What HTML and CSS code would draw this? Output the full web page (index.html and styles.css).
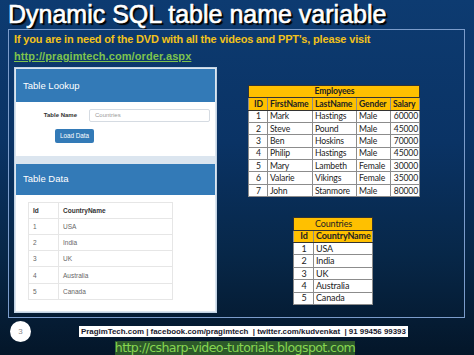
FILE: index.html
```html
<!DOCTYPE html>
<html lang="en">
<head>
    <meta charset="UTF-8">
    <title>Dynamic SQL table name variable</title>
    <link rel="stylesheet" href="styles.css">
</head>
<body>
    <div class="slide">
        <h1 class="slide-title">Dynamic SQL table name variable</h1>

        <div class="frame">
            <div class="notice">
                <p class="notice-text">If you are in need of the DVD with all the videos and PPT's, please visit</p>
                <a class="notice-link" href="#">http://pragimtech.com/order.aspx</a>
            </div>

            <div class="frame-content">
                <div class="app">
                    <div class="panel">
                        <div class="panel-heading">Table Lookup</div>
                        <div class="panel-body lookup-body">
                            <div class="form-row">
                                <label class="form-label">Table Name</label>
                                <div class="form-input">Countries</div>
                            </div>
                            <button class="load-button">Load Data</button>
                        </div>
                    </div>

                    <div class="panel panel-grow">
                        <div class="panel-heading">Table Data</div>
                        <div class="panel-body data-body">
                            <table class="data-table">
                                <tr><th class="col-id">Id</th><th>CountryName</th></tr>
                                <tr><td class="col-id">1</td><td>USA</td></tr>
                                <tr><td class="col-id">2</td><td>India</td></tr>
                                <tr><td class="col-id">3</td><td>UK</td></tr>
                                <tr><td class="col-id">4</td><td>Australia</td></tr>
                                <tr><td class="col-id">5</td><td>Canada</td></tr>
                            </table>
                        </div>
                    </div>
                </div>

                <div class="tables">
                    <table class="xl-table employees">
                        <colgroup>
                            <col class="w-id"><col class="w-first"><col class="w-last"><col class="w-gender"><col class="w-salary">
                        </colgroup>
                        <tr class="xl-caption"><th colspan="5">Employees</th></tr>
                        <tr class="xl-head">
                            <th class="num">ID</th><th>FirstName</th><th>LastName</th><th>Gender</th><th>Salary</th>
                        </tr>
                        <tr><td class="num">1</td><td>Mark</td><td>Hastings</td><td>Male</td><td class="money">60000</td></tr>
                        <tr><td class="num">2</td><td>Steve</td><td>Pound</td><td>Male</td><td class="money">45000</td></tr>
                        <tr><td class="num">3</td><td>Ben</td><td>Hoskins</td><td>Male</td><td class="money">70000</td></tr>
                        <tr><td class="num">4</td><td>Philip</td><td>Hastings</td><td>Male</td><td class="money">45000</td></tr>
                        <tr><td class="num">5</td><td>Mary</td><td>Lambeth</td><td>Female</td><td class="money">30000</td></tr>
                        <tr><td class="num">6</td><td>Valarie</td><td>Vikings</td><td>Female</td><td class="money">35000</td></tr>
                        <tr><td class="num">7</td><td>John</td><td>Stanmore</td><td>Male</td><td class="money">80000</td></tr>
                    </table>

                    <table class="xl-table countries">
                        <colgroup>
                            <col class="w-cid"><col>
                        </colgroup>
                        <tr class="xl-caption light"><th colspan="2">Countries</th></tr>
                        <tr class="xl-head"><th class="num">Id</th><th>CountryName</th></tr>
                        <tr><td class="num">1</td><td>USA</td></tr>
                        <tr><td class="num">2</td><td>India</td></tr>
                        <tr><td class="num">3</td><td>UK</td></tr>
                        <tr><td class="num">4</td><td>Australia</td></tr>
                        <tr><td class="num">5</td><td>Canada</td></tr>
                    </table>
                </div>
            </div>
        </div>

        <div class="footer">
            <div class="page-number">3</div>
            <div class="footer-contacts">PragimTech.com | facebook.com/pragimtech &nbsp;| twitter.com/kudvenkat &nbsp;| 91 99456 99393</div>
        </div>
        <div class="blog-row">
            <a class="blog-link" href="#">http://csharp-video-tutorials.blogspot.com</a>
        </div>
    </div>
</body>
</html>
```

FILE: styles.css
```css
* {
    margin: 0;
    padding: 0;
    box-sizing: border-box;
}

html, body {
    width: 474px;
    height: 355px;
    overflow: hidden;
}

body {
    font-family: "Liberation Sans", Arial, sans-serif;
    background: linear-gradient(180deg, #0d3b71 0%, #0a3365 40%, #072748 72%, #041629 100%);
    color: white;
}

.slide {
    display: flex;
    flex-direction: column;
    height: 100%;
}

.slide-title {
    font-size: 25px;
    font-weight: normal;
    line-height: 28px;
    padding-left: 8px;
    height: 29px;
    color: #ffffff;
    text-shadow: 1px 1px 0 #000, 2px 2px 1px #000;
    -webkit-text-stroke: 0.6px #fff;
}

.frame {
    margin-left: 8px;
    width: 457px;
    height: 292px;
    border: 1px solid #7b9ccb;
    display: flex;
    flex-direction: column;
}

.notice {
    padding: 3px 0 0 5px;
    height: 37px;
}

.notice-text {
    color: #f2c21b;
    font-size: 11px;
    font-weight: bold;
    line-height: 13px;
    letter-spacing: -0.17px;
}

.notice-link {
    display: inline-block;
    margin-top: 1px;
    color: #7ec34e;
    font-size: 11px;
    font-weight: bold;
    line-height: 13px;
    letter-spacing: 0.1px;
    text-decoration: underline;
}

.frame-content {
    display: flex;
    flex: 1;
    padding: 0 0 4px 5px;
}

/* left: screenshot of the web app */
.app {
    width: 203px;
    display: flex;
    flex-direction: column;
    gap: 8px;
    background: #dbe5ef;
    border: 1px solid #c2d3e4;
    padding: 1px;
}

.panel {
    background: #ffffff;
    display: flex;
    flex-direction: column;
}

.panel-grow {
    flex: 1;
}

.panel-heading {
    background: #337ab7;
    color: #ffffff;
    font-size: 9.5px;
    height: 33px;
    line-height: 33px;
    padding-left: 7px;
}

.panel-grow .panel-heading {
    height: 31px;
    line-height: 30px;
}

.lookup-body {
    height: 54px;
    padding-top: 7px;
}

.form-row {
    display: flex;
    align-items: center;
}

.form-label {
    width: 73px;
    text-align: right;
    padding-right: 12px;
    font-size: 6px;
    font-weight: bold;
    color: #333333;
}

.form-input {
    width: 121px;
    height: 13px;
    border: 1px solid #d5dbe2;
    border-radius: 2px;
    font-size: 6px;
    line-height: 11px;
    padding-left: 5px;
    color: #9a9a9a;
}

.load-button {
    display: block;
    margin: 7px 0 0 39px;
    width: 39px;
    height: 14px;
    background: #337ab7;
    border: none;
    border-radius: 2px;
    color: #ffffff;
    font-family: "Liberation Sans", Arial, sans-serif;
    font-size: 6.3px;
}

.data-body {
    padding: 7px 0 0 12px;
}

.data-table {
    border-collapse: collapse;
    width: 145px;
    font-size: 6.5px;
    color: #666666;
    border: 1px solid #e6e6e6;
}

.data-table th,
.data-table td {
    height: 16.2px;
    text-align: left;
    padding-left: 4px;
    border-top: 1px solid #e6e6e6;
}

.data-table th {
    color: #333333;
    font-weight: bold;
}

.data-table .col-id {
    width: 30px;
    border-right: 1px solid #e6e6e6;
}

/* right: excel style tables */
.tables {
    display: flex;
    flex-direction: column;
    padding-top: 18px;
}

.xl-table {
    border-collapse: collapse;
    table-layout: fixed;
    background: #ffffff;
    color: #222222;
    font-family: Lato, "Open Sans", sans-serif;
    font-size: 8.6px;
    letter-spacing: -0.15px;
}

.xl-table th,
.xl-table td {
    border: 1px solid #8c8c8c;
    height: 12.4px;
    line-height: 10px;
    padding: 0 1px 0 2px;
    text-align: left;
    white-space: nowrap;
    overflow: visible;
}

.xl-caption th {
    background: #ffc000;
    text-align: center;
    font-weight: bold;
    border: 1px solid #333333;
}

.xl-caption.light th {
    font-weight: normal;
}

.xl-head th {
    background: #ffc000;
    font-weight: bold;
    border-bottom: 1px solid #333333;
}

.xl-table .num {
    text-align: center;
}

.xl-table .money {
    text-align: right;
}

.employees {
    margin-left: 31px;
    width: 171px;
}

.w-id { width: 19px; }
.w-first { width: 45px; }
.w-last { width: 44px; }
.w-gender { width: 34px; }
.w-salary { width: 29px; }

.countries {
    margin: 20px 0 0 76px;
    width: 80px;
    font-size: 9px;
}

.w-cid { width: 20px; }

/* footer */
.footer {
    display: flex;
    align-items: center;
    height: 20px;
    margin-top: 3px;
    padding-left: 10px;
}

.page-number {
    width: 21px;
    height: 21px;
    border-radius: 50%;
    background: #ffffff;
    color: #8a8a8a;
    font-size: 8px;
    text-align: center;
    line-height: 21px;
}

.footer-contacts {
    margin-left: 48px;
    background: #ffffff;
    color: #1a1a2e;
    font-size: 7.9px;
    font-weight: bold;
    line-height: 11px;
    padding: 0 2px;
    white-space: nowrap;
}

.blog-row {
    display: flex;
    justify-content: center;
    padding-right: 4px;
}

.blog-link {
    color: #86d651;
    font-family: "DejaVu Sans", sans-serif;
    font-size: 12.6px;
    line-height: 14px;
    text-decoration: none;
    background: #2d5a2a;
    letter-spacing: -0.6px;
}
```
